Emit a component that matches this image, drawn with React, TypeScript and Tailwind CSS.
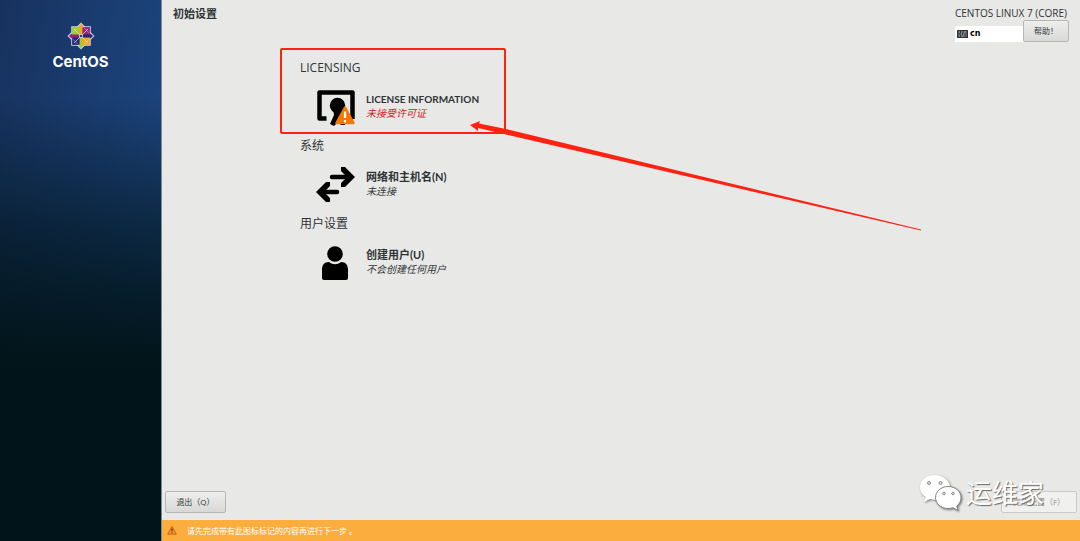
import type { ReactNode } from 'react';

const CentosLogo = () => (
  <svg viewBox="0 0 60 60" className="h-7 w-7" aria-hidden="true">
    <rect x="9" y="9" width="42" height="42" fill="#c9cbe0" />
    <path d="M30 1 59 30 30 59 1 30Z" fill="#c9cbe0" />
    <path d="M11 11h17v17H11z" fill="#9ccd2a" />
    <path d="M32 11h17v17H32z" fill="#932279" />
    <path d="M11 32h17v17H11z" fill="#262577" />
    <path d="M32 32h17v17H32z" fill="#efa724" />
    <path d="M15 15l12 12M45 15 33 27M15 45l12-12M45 45 33 33" stroke="#e4e3ee" strokeWidth="1.5" />
    <path d="M13 23l10-10M37 13l10 10M13 37l10 10M47 37 37 47" stroke="#e4e3ee" strokeWidth="1" />
    <path d="M30 4l6 7h-3v16h-6V11h-3z" fill="#efa724" />
    <path d="M56 30l-7 6v-3H33v-6h16v-3z" fill="#262577" />
    <path d="M30 56l-6-7h3V33h6v16h3z" fill="#9ccd2a" />
    <path d="M4 30l7-6v3h16v6H11v3z" fill="#932279" />
    <rect x="27" y="27" width="6" height="6" fill="#1d3f7a" stroke="#e4e3ee" strokeWidth="1.5" />
  </svg>
);

const LicenseIcon = () => (
  <svg viewBox="0 0 40 38" className="h-[38px] w-10" aria-hidden="true">
    <path
      d="M10.500 30.500H3.500v-26h33V31"
      fill="none"
      stroke="#000"
      strokeWidth="4.500"
      strokeLinejoin="round"
    />
    <circle cx="21.500" cy="17.500" r="7.700" fill="#000" />
    <path d="M17 20h10l2 17h-4l-3-3-4 4-4-2 4-9z" fill="#000" />
    <path d="M29 19.500 37.500 35h-17z" fill="#f57900" stroke="#f57900" strokeWidth="2.500" strokeLinejoin="round" />
    <path d="M29 23.500v6.500M29 32v2.500" stroke="#fff" strokeWidth="2.200" />
  </svg>
);

const NetworkIcon = () => (
  <svg viewBox="0 0 40 38" className="h-[38px] w-10" aria-hidden="true">
    <g fill="none" stroke="#000" strokeWidth="4.500">
      <path d="M16 11h18" strokeLinecap="round" />
      <path d="M21 26H5" strokeLinecap="round" />
    </g>
    <path d="M25 1h4l10 10-10 10h-4v-4l6-6-6-6z" />
    <path d="M14 16h-4L0 26l10 10h4v-4l-6-6 6-6z" />
  </svg>
);

const UserIcon = () => (
  <svg viewBox="0 0 40 38" className="h-[38px] w-10" aria-hidden="true">
    <circle cx="19" cy="10" r="7.800" />
    <path d="M6 34v-8c0-5 2-8 7-8 4 3 8 3 12 0 5 0 7 3 7 8v8q0 2-2 2H8q-2 0-2-2z" />
  </svg>
);

const WarningIcon = () => (
  <svg viewBox="0 0 22 20" className="h-[9px] w-[10px]" aria-hidden="true">
    <path d="M11 2 20 18H2z" fill="#f9a65a" stroke="#e8690b" strokeWidth="3" strokeLinejoin="round" />
    <path d="M11 6v6M11 14v2.500" stroke="#40301c" strokeWidth="2.500" />
  </svg>
);

const KeyboardIcon = () => (
  <svg viewBox="0 0 22 16" className="h-2 w-[11px] shrink-0" aria-hidden="true">
    <rect width="22" height="16" rx="1" fill="#2e3436" />
    <path d="M3 4h3m2 0h3m2 0h6M3 8h2m2 0h3m2 0h3m2 0h2M3 12h3m2 0h7m2 0h2" stroke="#c8cbcc" strokeWidth="2" />
  </svg>
);

const WeChatIcon = () => (
  <svg viewBox="0 0 44 38" className="h-[38px] w-11 drop-shadow-[1px_1px_1px_#777]" aria-hidden="true">
    <path
      d="M15 1C6 1 0 6.500 0 13.500c0 4 2 7 5.500 9.500L4 28l6-3c2 .6 4 .8 7 .7C33 25 30 15 30 12 29 6 23 1 15 1z"
      fill="#fff"
    />
    <path
      d="M28 12.500c-7 0-12.500 5-12.500 11s5.500 11 12.500 11c2 0 3.500-.3 5-.8l5 2.800-1.300-4.500c2.800-2 4.300-5 4.300-8.500 0-6-5.500-11-13-11z"
      fill="#fff"
      stroke="#858585"
    />
    <g fill="#e4e4e4" stroke="#8a8a8a" strokeWidth="1">
      <circle cx="9" cy="9" r="1.500" />
      <circle cx="20.500" cy="9" r="1.500" />
      <circle cx="24" cy="19.500" r="1.300" />
      <circle cx="33" cy="19.500" r="1.300" />
    </g>
  </svg>
);

type SpokeProps = {
  heading: string;
  title: string;
  status: string;
  icon: ReactNode;
  warning?: boolean;
  children?: ReactNode;
};

const Spoke = ({ heading, title, status, icon, warning, children }: SpokeProps) => (
  <section className="relative">
    <h2 className="text-[12px] leading-4 text-[#2e3436]">{heading}</h2>
    <button type="button" className="mt-3 ml-4 flex h-10 items-start gap-[10px] text-left">
      {icon}
      <span className="flex flex-col pt-1 text-[10px] leading-[14px]">
        <span
          className={`font-['Lato','Noto_Sans_CJK_SC',sans-serif] font-bold text-[#2e3436] ${
            warning ? 'text-[10px]' : 'text-[11px]'
          }`}
        >
          {title}
        </span>
        <span className={warning ? 'italic text-[#cc2222]' : 'italic text-[#2e3436]'}>{status}</span>
      </span>
    </button>
    {children}
  </section>
);

const App = () => {
  return (
    <div className="flex min-h-screen bg-[#e8e8e6] font-['Open_Sans','Noto_Sans_CJK_SC',sans-serif] text-[#2e3436]">
      {/* Sidebar */}
      <aside className="flex w-[15%] shrink-0 flex-col items-center border-r border-[#7b8c91] bg-[linear-gradient(to_bottom,transparent_0%,#01141900_18%,#01141999_42%,#011419d9_56%,#011419_68%),linear-gradient(100deg,#17325e,#1e4b8a)] pt-[22px]">
        <CentosLogo />
        <p className="mt-1 font-['Inter',sans-serif] text-[15px] leading-4 font-bold text-white">
          CentOS
        </p>
      </aside>

      <div className="flex min-w-0 flex-1 flex-col">
        {/* Header */}
        <header className="flex items-start justify-between pt-[6px] pr-[11px] pl-[11px]">
          <h1 className="text-[11px] leading-4 font-semibold">初始设置</h1>
          <div className="flex min-w-[114px] flex-col">
            <p className="text-[10px] leading-[14px]">CENTOS LINUX 7 (CORE)</p>
            <div className="flex items-end">
              <button
                type="button"
                className="flex h-4 flex-1 items-center gap-[2px] bg-white pl-[2px] font-['DejaVu_Sans',sans-serif] text-[8px] font-bold text-black"
              >
                <KeyboardIcon />
                cn
              </button>
              <button
                type="button"
                className="h-[22px] w-[46px] rounded-[2px] border border-[#b5b7b4] bg-linear-to-b from-[#eeeeed] to-[#d8d8d6] text-[8px] leading-3"
              >
                帮助！
              </button>
            </div>
          </div>
        </header>

        {/* Settings */}
        <main className="flex flex-1 flex-col gap-[10px] pt-[18px] pl-[138px]">
          <Spoke
            heading="LICENSING"
            title="LICENSE INFORMATION"
            status="未接受许可证"
            icon={<LicenseIcon />}
            warning
          >
            <div className="pointer-events-none absolute -top-3 -left-5 h-[86px] w-[226px] rounded-[2px] border-2 border-[#ff2213]">
              <svg viewBox="0 0 452 112" className="absolute top-[70px] left-[188px] h-[112px] w-[452px] max-w-none">
                <path d="M0 5 10 1 9 3.500 36 9 451 109.500 451 110.500 36 14.500 8 8 8 11z" fill="#ff2213" />
              </svg>
            </div>
          </Spoke>
          <Spoke heading="系统" title="网络和主机名(N)" status="未连接" icon={<NetworkIcon />} />
          <Spoke heading="用户设置" title="创建用户(U)" status="不会创建任何用户" icon={<UserIcon />} />
        </main>

        {/* Actions */}
        <div className="relative flex justify-between px-[3px] pb-[7px]">
          <button
            type="button"
            className="h-[22px] w-[61px] rounded-[2px] border border-[#b5b7b4] bg-linear-to-b from-[#eeeeed] to-[#d8d8d6] text-[8px] leading-3"
          >
            退出（Q）
          </button>
          <button
            type="button"
            disabled
            className="h-[22px] w-[76px] rounded-[2px] border border-[#c9cac8] bg-[#f0f0ef] text-[8px] leading-3 text-[#8d9091]"
          >
            完成配置（F）
          </button>
          <div className="pointer-events-none absolute right-9 bottom-2 flex items-center gap-[2px]">
            <WeChatIcon />
            <span className="text-[26px] leading-8 text-white [text-shadow:1px_1px_1px_#666]">运维家</span>
          </div>
        </div>

        <footer className="flex h-[21px] items-center gap-[10px] bg-[#fbad3e] pl-[5px] text-[8px] text-white">
          <WarningIcon />
          <p>请先完成带有此图标标记的内容再进行下一步 。</p>
        </footer>
      </div>
    </div>
  );
};

export default App;
